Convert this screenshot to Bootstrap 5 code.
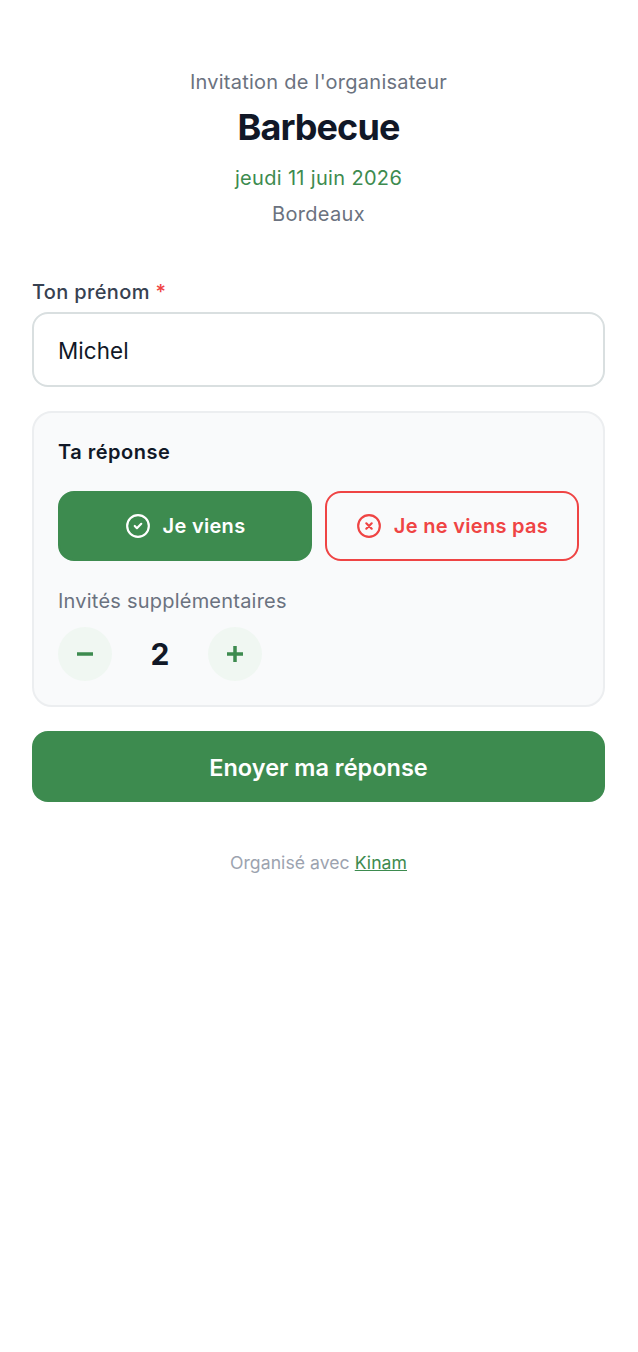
<!doctype html>
<html lang="fr"><head><meta charset="utf-8">
<link href="https://cdn.jsdelivr.net/npm/bootstrap@5.3.0/dist/css/bootstrap.min.css" rel="stylesheet">
<style>
body{font-family:Inter,sans-serif;background:#fff;color:#111827}
.page{padding:70px 33px 0 32px}
.over{font-size:20px;line-height:24px;letter-spacing:.25px;color:#6b7280}
.ttl{font-size:36px;line-height:44px;font-weight:700;letter-spacing:-.9px;color:#111827;margin:11px 0 0}
.dt{font-size:20px;line-height:28px;letter-spacing:.33px;color:#3d8b4f;margin-top:15px}
.loc{font-size:20px;line-height:24px;letter-spacing:.3px;color:#6b7280;margin-top:10px}
.lbl{font-size:20px;line-height:24px;font-weight:450;letter-spacing:.35px;color:#374151;margin:54px 0 8px;display:block}
.req{color:#ef4444}
.inp{height:75px;border:2px solid #d9dfe0;border-radius:16px;padding:2px 24px 0;font-size:22.4px;letter-spacing:.1px;color:#111827;box-shadow:none}
.panel{margin-top:24px;height:296px;background:#f9fafb;border:2px solid #eceef0;border-radius:20px;padding:25px 24px 24px}
.pt{font-size:20px;line-height:28px;font-weight:600;letter-spacing:.5px;color:#111827;margin-bottom:25px}
.ch-row{gap:13px}
.ch{flex:1 1 0;height:70px;border-radius:16px;font-size:20px;font-weight:600;letter-spacing:.3px;gap:12px;border:2px solid #3d8b4f}
.ch-y,.ch-y:hover{background:#3d8b4f;color:#fff}
.ch-n,.ch-n:hover{background:transparent;color:#ef4444;border-color:#ef4444}
.sub{font-size:20px;line-height:28px;letter-spacing:.22px;color:#6b7280;margin:26px 0 12px}
.rnd{width:54px;height:54px;border-radius:50%;background:#f0f7f2;border:0;padding:0}
.cnt{width:96px;text-align:center;font-size:30px;font-weight:700;color:#111827}
.send,.send:hover{margin-top:24px;height:71px;width:100%;padding-top:8px;background:#3d8b4f;color:#fff;border:0;border-radius:16px;font-size:23.5px;font-weight:600}
.foot{margin-top:49px;font-size:17.6px;line-height:24px;letter-spacing:.05px;color:#9ca3af}
.foot a{color:#3d8b4f}
</style></head><body>
<main class="page">
<header class="text-center">
<div class="over">Invitation de l'organisateur</div>
<h1 class="ttl">Barbecue</h1>
<div class="dt">jeudi 11 juin 2026</div>
<div class="loc">Bordeaux</div>
</header>
<label class="lbl" for="p">Ton prénom <span class="req">*</span></label>
<input id="p" class="form-control inp" value="Michel">
<section class="panel">
<div class="pt">Ta réponse</div>
<div class="d-flex ch-row">
<button class="btn ch ch-y d-flex align-items-center justify-content-center"><svg width="26" height="26" viewBox="0 0 24 24" fill="none" stroke="currentColor" stroke-width="2" stroke-linecap="round" stroke-linejoin="round"><circle cx="12" cy="12" r="10"/><path d="m9 12 2 2 4-4"/></svg>Je viens</button>
<button class="btn ch ch-n d-flex align-items-center justify-content-center"><svg width="26" height="26" viewBox="0 0 24 24" fill="none" stroke="currentColor" stroke-width="2" stroke-linecap="round"><circle cx="12" cy="12" r="10"/><path d="m9.5 9.5 5 5m0-5-5 5"/></svg>Je ne viens pas</button>
</div>
<div class="sub">Invités supplémentaires</div>
<div class="d-flex align-items-center">
<button class="rnd d-flex align-items-center justify-content-center" aria-label="moins"><svg width="20" height="20" viewBox="0 0 20 20"><path d="M2 10h16" stroke="#3d8b4f" stroke-width="3.5"/></svg></button>
<div class="cnt">2</div>
<button class="rnd d-flex align-items-center justify-content-center" aria-label="plus"><svg width="20" height="20" viewBox="0 0 20 20"><path d="M2 10h16M10 2v16" stroke="#3d8b4f" stroke-width="3.5"/></svg></button>
</div>
</section>
<button class="btn send">Enoyer ma réponse</button>
<footer class="foot text-center">Organisé avec <a href="#">Kinam</a></footer>
</main>
<script src="https://cdn.jsdelivr.net/npm/bootstrap@5.3.0/dist/js/bootstrap.bundle.min.js"></script>
</body></html>
